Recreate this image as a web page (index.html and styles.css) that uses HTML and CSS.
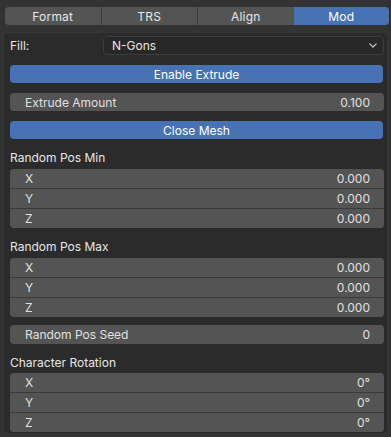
FILE: index.html
```html
<!DOCTYPE html>
<html lang="en">
<head>
    <meta charset="UTF-8">
    <meta name="viewport" content="width=device-width, initial-scale=1.0">
    <title>Text Tool - Mod</title>
    <link rel="stylesheet" href="styles.css">
</head>
<body>
    <!-- Tab Bar -->
    <div class="tabs">
        <div class="tab">Format</div>
        <div class="tab">TRS</div>
        <div class="tab">Align</div>
        <div class="tab active">Mod</div>
    </div>

    <!-- Panel -->
    <div class="panel">
        <div class="prop-row">
            <span class="prop-label">Fill:</span>
            <div class="dropdown">
                <span>N-Gons</span>
                <svg class="chevron" width="8" height="5" viewBox="0 0 8 5">
                    <path d="M0.8 0.8 L4 4 L7.2 0.8" fill="none" stroke="#c8c8c8" stroke-width="1.2" stroke-linecap="round" stroke-linejoin="round"/>
                </svg>
            </div>
        </div>

        <div class="btn">Enable Extrude</div>

        <div class="field single">
            <span>Extrude Amount</span>
            <span>0.100</span>
        </div>

        <div class="btn">Close Mesh</div>

        <div class="section-label">Random Pos Min</div>
        <div class="group">
            <div class="field"><span>X</span><span>0.000</span></div>
            <div class="field"><span>Y</span><span>0.000</span></div>
            <div class="field"><span>Z</span><span>0.000</span></div>
        </div>

        <div class="section-label">Random Pos Max</div>
        <div class="group">
            <div class="field"><span>X</span><span>0.000</span></div>
            <div class="field"><span>Y</span><span>0.000</span></div>
            <div class="field"><span>Z</span><span>0.000</span></div>
        </div>

        <div class="field single seed">
            <span>Random Pos Seed</span>
            <span>0</span>
        </div>

        <div class="section-label short">Character Rotation</div>
        <div class="group">
            <div class="field"><span>X</span><span>0°</span></div>
            <div class="field"><span>Y</span><span>0°</span></div>
            <div class="field"><span>Z</span><span>0°</span></div>
        </div>
    </div>
</body>
</html>
```

FILE: styles.css
```css
:root {
    --outer-bg: #333333;
    --panel-bg: #2b2b2b;
    --field-bg: #545454;
    --divider: #3a3a3a;
    --blue: #4772b3;
    --text: #e6e6e6;
}

body {
    font-family: 'Inter', 'Liberation Sans', sans-serif;
    font-size: 12px;
    margin: 0;
    width: 391px;
    height: 437px;
    overflow: hidden;
    background-color: var(--outer-bg);
    color: var(--text);
}

/* Tabs */
.tabs {
    display: flex;
    height: 18px;
    margin: 7px 2px 0 5px;
    border-radius: 4px;
    overflow: hidden;
}

.tab {
    flex: 1;
    display: flex;
    align-items: center;
    justify-content: center;
    background-color: var(--field-bg);
    border-left: 1px solid var(--divider);
    letter-spacing: 0.2px;
}

.tab:first-child {
    border-left: none;
}

.tab.active {
    background-color: var(--blue);
    color: #ffffff;
    border-left: none;
}

/* Panel */
.panel {
    margin: 7px 3px 0 3px;
    padding: 3px 3px 0 6px;
    height: 397px;
    background-color: var(--panel-bg);
    border: 1px solid #363636;
    border-radius: 5px;
}

.prop-row {
    display: flex;
    align-items: center;
    height: 19px;
}

.prop-label {
    width: 93px;
}

.dropdown {
    flex: 1;
    display: flex;
    align-items: center;
    justify-content: space-between;
    height: 17px;
    padding: 0 6px 0 8px;
    background-color: #282828;
    border: 1px solid #3d3d3d;
    border-radius: 4px;
}

.btn {
    display: flex;
    align-items: center;
    justify-content: center;
    height: 18px;
    margin-top: 10px;
    margin-right: 1px;
    background-color: var(--blue);
    color: #ffffff;
    border-radius: 4px;
}

.field {
    display: flex;
    align-items: center;
    justify-content: space-between;
    height: 19px;
    padding: 0 14px 0 15px;
    background-color: var(--field-bg);
    color: #e0e0e0;
}

.field.single {
    height: 18px;
    margin-top: 10px;
    border-radius: 4px;
}

.field.seed {
    height: 19px;
    margin-top: 8px;
}

.section-label {
    height: 30px;
    box-sizing: border-box;
    padding-top: 11px;
    line-height: 16px;
}

.section-label.short {
    height: 29px;
}

.group {
    display: flex;
    flex-direction: column;
    gap: 1px;
    background-color: var(--divider);
    border-radius: 4px;
    overflow: hidden;
}
```
